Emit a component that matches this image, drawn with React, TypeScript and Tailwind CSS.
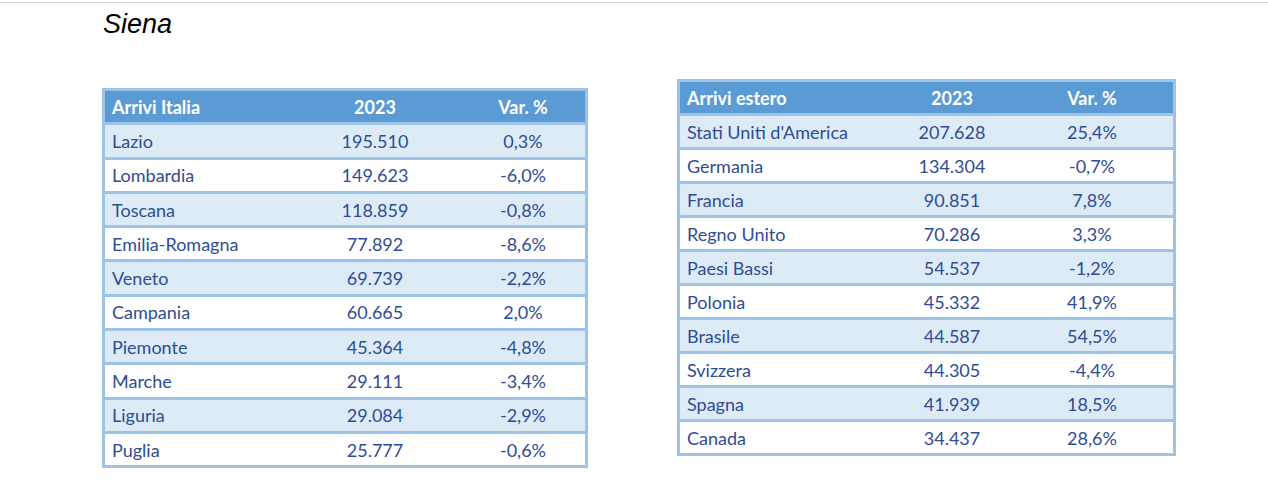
const italia = [
  ['Lazio', '195.510', '0,3%'],
  ['Lombardia', '149.623', '-6,0%'],
  ['Toscana', '118.859', '-0,8%'],
  ['Emilia-Romagna', '77.892', '-8,6%'],
  ['Veneto', '69.739', '-2,2%'],
  ['Campania', '60.665', '2,0%'],
  ['Piemonte', '45.364', '-4,8%'],
  ['Marche', '29.111', '-3,4%'],
  ['Liguria', '29.084', '-2,9%'],
  ['Puglia', '25.777', '-0,6%'],
]

const estero = [
  ["Stati Uniti d'America", '207.628', '25,4%'],
  ['Germania', '134.304', '-0,7%'],
  ['Francia', '90.851', '7,8%'],
  ['Regno Unito', '70.286', '3,3%'],
  ['Paesi Bassi', '54.537', '-1,2%'],
  ['Polonia', '45.332', '41,9%'],
  ['Brasile', '44.587', '54,5%'],
  ['Svizzera', '44.305', '-4,4%'],
  ['Spagna', '41.939', '18,5%'],
  ['Canada', '34.437', '28,6%'],
]

function Table({ title, rows, cols, rowH }: { title: string; rows: string[][]; cols: string; rowH: string }) {
  return (
    <div className="border-[3px] border-[#9dc3e6] bg-[#9dc3e6] flex flex-col gap-[3px]">
      <div className={`grid ${cols} ${rowH} items-center bg-[#5b9bd5] text-white font-bold`}>
        <div className="pl-[7px]">{title}</div>
        <div className="text-center">2023</div>
        <div className="text-center">Var. %</div>
      </div>
      {rows.map((r, i) => (
        <div key={r[0]} className={`grid ${cols} ${rowH} items-center text-[#2f4c96] ${i % 2 === 0 ? 'bg-[#ddebf7]' : 'bg-white'}`}>
          <div className="pl-[7px] whitespace-nowrap">{r[0]}</div>
          <div className="text-center">{r[1]}</div>
          <div className="text-center">{r[2]}</div>
        </div>
      ))}
    </div>
  )
}

export default function App() {
  return (
    <div className="min-h-[500px] bg-white pt-[2px]">
      <div className="border-t border-[#d3d3d3]" />
      <h1 className="pl-[103px] pt-[6px] text-[27px] leading-[30px] italic text-black font-['Liberation_Sans',Arial,sans-serif]">
        Siena
      </h1>
      <div className="flex items-start gap-[89px] pl-[102px] mt-[40px] font-['Lato',sans-serif] text-[18px] leading-[22px]">
        <div className="mt-[9px] w-[486px]">
          <Table title="Arrivi Italia" rows={italia} cols="grid-cols-[184px_172px_124px]" rowH="h-[31.3px]" />
        </div>
        <div className="w-[499px]">
          <Table title="Arrivi estero" rows={estero} cols="grid-cols-[213px_118px_162px]" rowH="h-[31px]" />
        </div>
      </div>
    </div>
  )
}
